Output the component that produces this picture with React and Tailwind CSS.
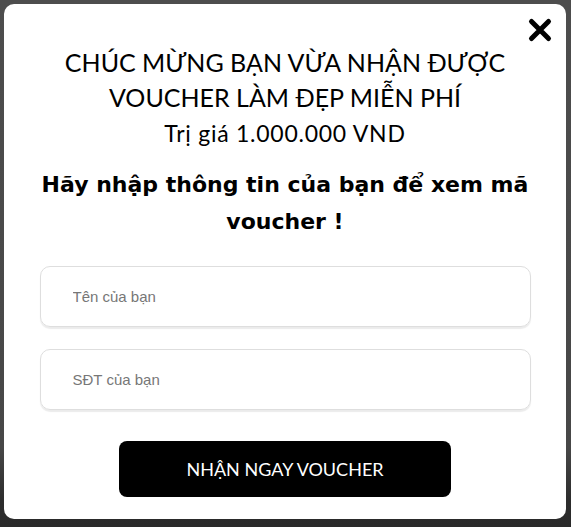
import React from 'react';

const CloseIcon = () => (
  <svg width="26" height="26" viewBox="0 0 26 26" fill="none">
    <path d="M4.5 4.5 L21.5 21.5 M21.5 4.5 L4.5 21.5" stroke="#000" strokeWidth="5" strokeLinecap="round" />
  </svg>
);

const inputClass =
  "h-[61px] w-full rounded-[10px] border border-[#dedede] shadow-[0_2px_1px_rgba(0,0,0,0.08)] px-[32px] text-[15px] font-['Liberation_Sans',sans-serif] placeholder:text-[#777] outline-none";

export default function App() {
  return (
    <div className="w-[571px] h-[527px] overflow-hidden bg-[linear-gradient(180deg,#4d4d4d_0%,#474747_85%,#2c2c2c_95%,#2a2a2a_100%)] pt-[4px] pl-[4px]">
      <div className="relative w-[562px] h-[515px] rounded-[10px] bg-white flex flex-col items-center pt-[41px] font-['Lato',sans-serif] text-black">
        <button className="absolute right-[13px] top-[13px]" aria-label="Đóng">
          <CloseIcon />
        </button>

        <h2 className="text-center text-[25px] leading-[35px] font-normal">
          CHÚC MỪNG BẠN VỪA NHẬN ĐƯỢC
          <br />
          VOUCHER LÀM ĐẸP MIỄN PHÍ
        </h2>
        <p className="text-center text-[23px] leading-[28px] tracking-[0.75px] mt-[4px]">Trị giá 1.000.000 VND</p>

        <p className="text-center text-[22px] leading-[37px] font-bold mt-[19px] font-['DejaVu_Sans',sans-serif]">
          Hãy nhập thông tin của bạn để xem mã
          <br />
          voucher !
        </p>

        <div className="w-[491px] flex flex-col gap-[22px] mt-[26px]">
          <input type="text" placeholder="Tên của bạn" className={inputClass} />
          <input type="text" placeholder="SĐT của bạn" className={inputClass} />
        </div>

        <button className="mt-[31px] w-[332px] h-[56px] rounded-[8px] bg-black text-white text-[18px] font-['Lato',sans-serif]">
          NHẬN NGAY VOUCHER
        </button>
      </div>
    </div>
  );
}
